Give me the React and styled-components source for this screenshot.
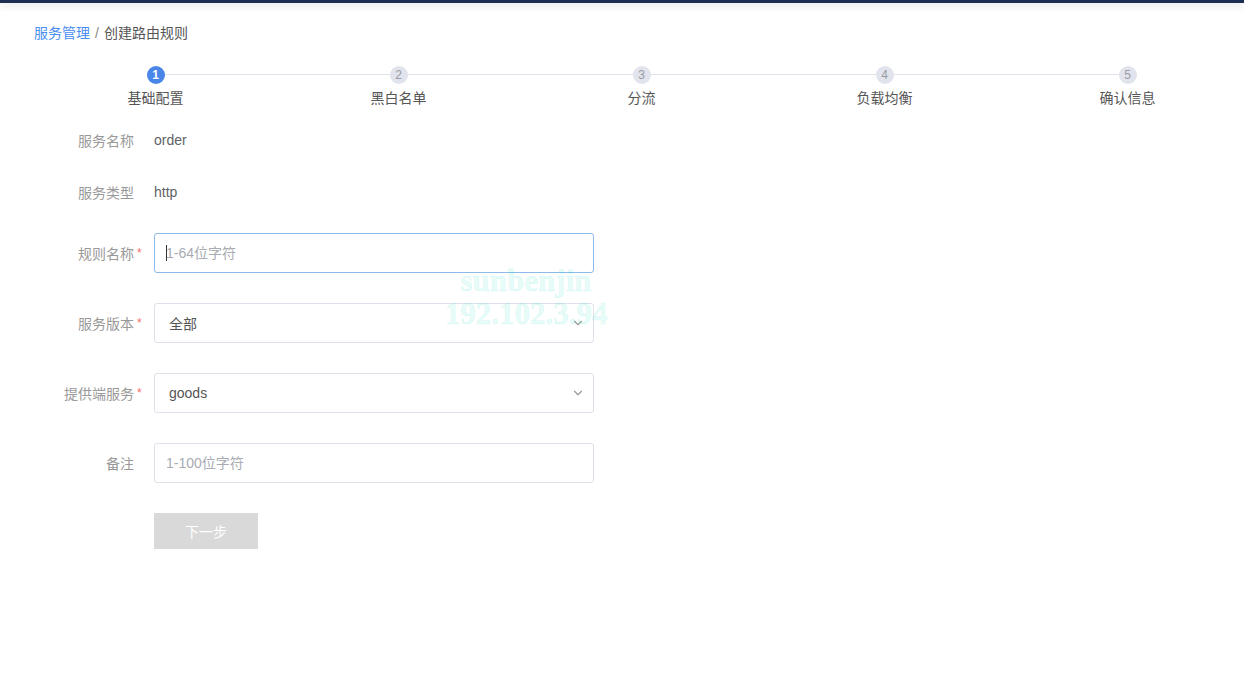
import React from "react";
import styled, { createGlobalStyle } from "styled-components";
import { ChevronDown } from "lucide-react";

const Global = createGlobalStyle`
  html, body { margin: 0; padding: 0; background: #fff; overflow: hidden; }
  body { font-family: "Liberation Sans", "Noto Sans CJK SC", sans-serif; font-size: 14px; color: #606266; }
  * { box-sizing: border-box; }
`;

const Page = styled.div`
  position: relative;
  width: 1244px;
  height: 677px;
  overflow: hidden;
`;

const TopBar = styled.div`
  height: 3px;
  background: #1c2e52;
  box-shadow: 0 2px 8px rgba(0, 0, 0, 0.18);
`;

const Breadcrumb = styled.nav`
  display: flex;
  align-items: center;
  gap: 5px;
  padding: 18px 0 0 34px;
  height: 41px;
  line-height: 20px;
  font-size: 14px;
`;

const Crumb = styled.span`
  color: ${(p) => (p.$link ? "#4a8ef0" : "#555")};
`;

const Sep = styled.span`
  color: #888;
`;

const Steps = styled.div`
  display: flex;
  padding: 22px 0 0 34px;
  width: 1260px;
`;

const Step = styled.div`
  flex: 0 0 243px;
  display: flex;
  flex-direction: column;
  align-items: center;
`;

const StepHead = styled.div`
  position: relative;
  width: 100%;
  height: 18px;
  display: flex;
  justify-content: center;
  &::after {
    content: "";
    display: ${(p) => (p.$last ? "none" : "block")};
    position: absolute;
    top: 8px;
    left: calc(50% + 9px);
    width: calc(100% - 18px);
    height: 1px;
    background: #e0e3ec;
  }
`;

const StepDot = styled.div`
  width: 18px;
  height: 18px;
  border-radius: 50%;
  background: ${(p) => (p.$active ? "#4a86e8" : "#e1e4ec")};
  color: ${(p) => (p.$active ? "#fff" : "#9a9ca4")};
  font-size: 12px;
  font-weight: ${(p) => (p.$active ? 700 : 400)};
  display: flex;
  align-items: center;
  justify-content: center;
  line-height: 1;
`;

const StepTitle = styled.div`
  margin-top: 4px;
  line-height: 20px;
  font-size: 14px;
  color: #555;
`;

const Form = styled.div`
  display: flex;
  flex-direction: column;
  padding-top: 12px;
`;

const FormItem = styled.div`
  display: flex;
  align-items: center;
  height: ${(p) => p.$h || 40}px;
  margin-bottom: ${(p) => p.$mb ?? 30}px;
`;

const Label = styled.div`
  width: 154px;
  display: flex;
  justify-content: flex-end;
  align-items: center;
  color: #999;
  font-size: 14px;
`;

const Star = styled.span`
  width: 20px;
  padding-left: 3px;
  color: #f56c6c;
  font-size: 12px;
`;

const Value = styled.div`
  color: #606266;
  font-size: 14px;
`;

const Field = styled.div`
  position: relative;
  width: 440px;
  height: 40px;
`;

const Input = styled.input`
  width: 100%;
  height: 100%;
  border: 1px solid ${(p) => (p.$focus ? "#8cbaea" : "#dfe1ea")};
  border-radius: 3px;
  padding: 0 11px;
  font-family: inherit;
  font-size: 14px;
  color: #606266;
  outline: none;
  &::placeholder { color: #a8abb2; }
`;

const Caret = styled.span`
  position: absolute;
  left: 12px;
  top: 12px;
  width: 1px;
  height: 16px;
  background: #333;
`;

const Select = styled.div`
  width: 100%;
  height: 100%;
  border: 1px solid #dfe1ea;
  border-radius: 3px;
  padding: 0 8px 0 14px;
  display: flex;
  align-items: center;
  justify-content: space-between;
  color: #555;
  font-size: 14px;
`;

const Button = styled.button`
  width: 104px;
  height: 36px;
  border: none;
  background: #d9d9d9;
  color: #fff;
  font-family: inherit;
  font-size: 14px;
  cursor: not-allowed;
`;

const Watermark = styled.div`
  position: absolute;
  left: 416px;
  top: 264px;
  width: 220px;
  text-align: center;
  font-family: "Liberation Serif", serif;
  font-weight: 700;
  font-size: 31px;
  line-height: 33px;
  color: rgba(0, 225, 195, 0.1);
  -webkit-text-stroke: 0.6px rgba(0, 210, 185, 0.14);
  pointer-events: none;
`;

const steps = ["基础配置", "黑白名单", "分流", "负载均衡", "确认信息"];

export default function App() {
  return (
    <Page>
      <Global />
      <TopBar />
      <Breadcrumb>
        <Crumb $link>服务管理</Crumb>
        <Sep>/</Sep>
        <Crumb>创建路由规则</Crumb>
      </Breadcrumb>
      <Steps>
        {steps.map((s, i) => (
          <Step key={s}>
            <StepHead $last={i === steps.length - 1}>
              <StepDot $active={i === 0}>{i + 1}</StepDot>
            </StepHead>
            <StepTitle>{s}</StepTitle>
          </Step>
        ))}
      </Steps>
      <Form>
        <FormItem $mb={12}>
          <Label>服务名称<Star /></Label>
          <Value>order</Value>
        </FormItem>
        <FormItem $mb={21}>
          <Label>服务类型<Star /></Label>
          <Value>http</Value>
        </FormItem>
        <FormItem>
          <Label>规则名称<Star>*</Star></Label>
          <Field>
            <Input $focus placeholder="1-64位字符" readOnly />
            <Caret />
          </Field>
        </FormItem>
        <FormItem>
          <Label>服务版本<Star>*</Star></Label>
          <Field>
            <Select>
              <span>全部</span>
              <ChevronDown size={14} color="#999" strokeWidth={2} />
            </Select>
          </Field>
        </FormItem>
        <FormItem>
          <Label>提供端服务<Star>*</Star></Label>
          <Field>
            <Select>
              <span>goods</span>
              <ChevronDown size={14} color="#999" strokeWidth={2} />
            </Select>
          </Field>
        </FormItem>
        <FormItem>
          <Label>备注<Star /></Label>
          <Field>
            <Input placeholder="1-100位字符" readOnly />
          </Field>
        </FormItem>
        <FormItem $h={36} $mb={0}>
          <Label />
          <Button>下一步</Button>
        </FormItem>
      </Form>
      <Watermark>
        sunbenjin
        <br />
        192.102.3.94
      </Watermark>
    </Page>
  );
}
